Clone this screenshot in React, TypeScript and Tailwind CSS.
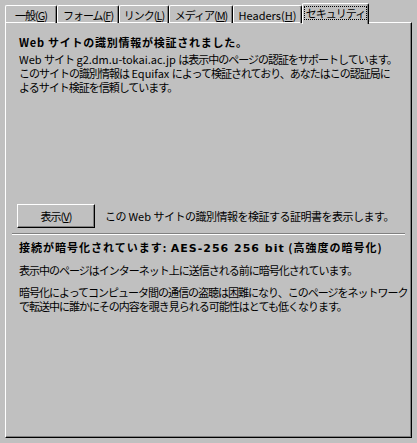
import React from "react";

const font = { fontFamily: '"Noto Sans CJK JP", "Liberation Sans", sans-serif' };

function U({ c }: { c: string }) {
  return <span className="underline underline-offset-1">{c}</span>;
}

function L({ children }: { children: React.ReactNode }) {
  return <span className="tracking-normal">{children}</span>;
}

function Tab({ w, children }: { w: string; children: React.ReactNode }) {
  return (
    <div
      className={`${w} h-[18px] mt-[2px] flex items-center justify-center border-t border-l border-r border-t-white border-l-white border-r-black rounded-tl-[2px] rounded-tr-[2px] shadow-[inset_-1px_0_0_#808080] whitespace-nowrap`}
    >
      {children}
    </div>
  );
}

export default function App() {
  return (
    <div
      className="w-[417px] h-[443px] bg-[#c0c0c0] text-black text-[11px] tracking-[-1px] leading-[14px] select-none"
      style={font}
    >
      <div className="pt-[3px] pl-[5px] flex h-[23px] relative z-10">
        <Tab w="w-[52px]">
          <span>一般(<U c="G" />)</span>
        </Tab>
        <Tab w="w-[62px]">
          <span>フォーム(<U c="F" />)</span>
        </Tab>
        <Tab w="w-[50px]">
          <span>リンク(<U c="L" />)</span>
        </Tab>
        <Tab w="w-[64px]">
          <span>メディア(<U c="M" />)</span>
        </Tab>
        <Tab w="w-[69px]">
          <span className="tracking-normal">Headers(<U c="H" />)</span>
        </Tab>
        <div className="w-[67px] h-[21px] bg-[#c0c0c0] flex items-start justify-center pt-[2px] border-t border-l border-r border-t-white border-l-white border-r-black rounded-tl-[2px] rounded-tr-[2px] shadow-[inset_-1px_0_0_#808080]">
          <span className="border border-dotted border-black px-[1px] leading-[12px]">セキュリティ</span>
        </div>
      </div>
      <div className="ml-[5px] w-[407px] h-[416px] -mt-[1px] border-t border-l border-t-white border-l-white border-r border-b border-r-black border-b-black shadow-[inset_-1px_-1px_0_#808080]">
        <div className="pl-[13px] whitespace-nowrap">
          <div className="mt-[12px] font-bold tracking-[0.75px]">
            Web サイトの識別情報が検証されました。
          </div>
          <div className="mt-[3px]">
            <div>
              <L>Web </L>サイト<L> g2.dm.u-tokai.ac.jp </L>は表示中のページの認証をサポートしています。
            </div>
            <div>
              このサイトの識別情報は<L> Equifax </L>によって検証されており、あなたはこの認証局に
            </div>
            <div>よるサイト検証を信頼しています。</div>
          </div>
        </div>
        <div className="mt-[110px] pl-[11px] flex items-center whitespace-nowrap">
          <button
            className="w-[78px] h-[24px] bg-[#c0c0c0] border border-t-white border-l-white border-r-black border-b-black shadow-[inset_-1px_-1px_0_#808080] flex items-center justify-center tracking-[-1px]"
            style={font}
          >
            <span>表示(<U c="V" />)</span>
          </button>
          <span className="ml-[10px] tracking-[-0.5px]">
            この<L> Web </L>サイトの識別情報を検証する証明書を表示します。
          </span>
        </div>
        <div className="mt-[5px] mx-[6px] h-[2px] border-t border-t-[#808080] border-b border-b-white" />
        <div className="pl-[13px] whitespace-nowrap">
          <div className="mt-[5px] font-bold tracking-[1px]">
            接続が暗号化されています:{" "}
            <span style={{ fontFamily: '"DejaVu Sans", sans-serif' }}>AES-256 256 bit</span>{" "}
            (高強度の暗号化)
          </div>
          <div className="mt-[7px]">表示中のページはインターネット上に送信される前に暗号化されています。</div>
          <div className="mt-[8px]">
            <div>暗号化によってコンピュータ間の通信の盗聴は困難になり、このページをネットワーク</div>
            <div>で転送中に誰かにその内容を覗き見られる可能性はとても低くなります。</div>
          </div>
        </div>
      </div>
    </div>
  );
}
